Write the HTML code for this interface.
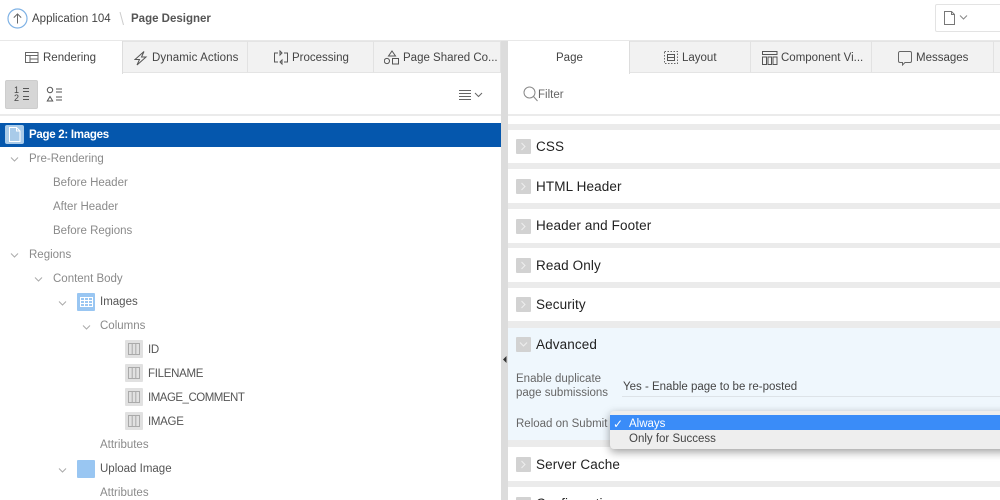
<!DOCTYPE html>
<html><head><meta charset="utf-8">
<style>
html,body{margin:0;padding:0;background:#fff}
#p{position:relative;width:1000px;height:500px;overflow:hidden;background:#fff;font-family:"Liberation Sans",sans-serif;font-size:11.5px;color:#444}
#p div,#p svg{position:absolute}
.t{white-space:nowrap;line-height:14px;letter-spacing:0}
.tab{background:#f2f2f2;top:41px;height:32px;border-right:1px solid #e2e2e2;border-bottom:1px solid #e4e4e4;border-top:1px solid #e4e4e4;box-sizing:border-box}
.g{color:#8a8a8a}
.d{color:#555}
.h{font-size:13.5px;color:#222;letter-spacing:.12px;line-height:16px;white-space:nowrap;left:536px}
.b{left:516px;width:15px;height:15px;background:#d2d2d2;border-radius:1px}
.band{left:508px;width:492px;background:#ebebeb}
svg{fill:none;stroke:#555;stroke-width:1}
.up{letter-spacing:-.3px}
</style></head><body><div id="p">

<!-- Header -->
<svg style="left:7px;top:8px" width="21" height="21" viewBox="0 0 21 21"><circle cx="10.5" cy="10.5" r="9.5" stroke="#7fb2e5" stroke-width="1.2"/><path d="M10.5 15.5V6M6.8 9.6l3.7-3.7 3.7 3.7" stroke="#666"/></svg>
<div class="t" style="left:32px;top:12px;color:#444">Application 104</div>
<svg style="left:119px;top:11px" width="6" height="15"><path d="M1 1l3.500 13" stroke="#ccc"/></svg>
<div class="t" style="left:131px;top:12px;font-weight:bold;color:#555">Page Designer</div>
<div style="left:935px;top:4px;width:70px;height:28px;box-sizing:border-box;border:1px solid #e3e3e3;border-radius:2px"></div>
<svg style="left:943px;top:10px" width="30" height="16"><path d="M1.500 1.500h7l3 3v10h-10zM8.500 1.500v3h3" stroke="#777"/><path d="M17 5.500l3.500 3.500 3.500-3.500" stroke="#888"/></svg>

<!-- Left tabs -->
<div style="left:0;top:40px;width:1000px;height:1px;background:#e8e8e8"></div>
<div class="tab" style="left:122px;width:126px"></div>
<div class="tab" style="left:248px;width:126px"></div>
<div class="tab" style="left:374px;width:127px"></div>
<div style="left:122px;top:41px;width:1px;height:33px;background:#ddd"></div>
<svg style="left:25px;top:51px" width="14" height="13"><path d="M.5 1.500h12.500v10H.5zM.5 4.500h12.500M5 4.500v7M5 8h8" stroke="#666"/></svg>
<div class="t" style="left:43px;top:51px">Rendering</div>
<svg style="left:134px;top:51px" width="14" height="15"><path d="M10 .5L1 8.500h4.500L3 14l9-8H7.500z" stroke="#555"/></svg>
<div class="t" style="left:152px;top:51px;letter-spacing:.1px">Dynamic Actions</div>
<svg style="left:273px;top:50px" width="16" height="15"><path d="M5 3H1.500v9H5M11 12h3.500V3H11M7 1v4l2-2zM9 10v4l-2-2z" stroke="#555"/></svg>
<div class="t" style="left:292px;top:51px">Processing</div>
<svg style="left:384px;top:50px" width="16" height="16"><path d="M8 1l3.500 5h-7zM5.500 11a2.600 2.600 0 1 1-5.200 0 2.600 2.600 0 0 1 5.200 0zM8.500 8.500h6v5.500h-6z" stroke="#555"/></svg>
<div class="t" style="left:403px;top:51px">Page Shared Co...</div>

<!-- Left toolbar -->
<div style="left:5px;top:80px;width:33px;height:29px;box-sizing:border-box;background:#d6d6d6;border:1px solid #cdcdcd;border-radius:2px"></div>
<div class="t" style="left:14px;top:83px;font-size:9px;color:#444">1</div>
<div class="t" style="left:14px;top:91px;font-size:9px;color:#444">2</div>
<svg style="left:22px;top:86px" width="8" height="16"><path d="M1 2.500h6M1 5.500h6M1 10.500h6M1 13.500h6" stroke="#555"/></svg>
<svg style="left:46px;top:86px" width="18" height="17"><circle cx="4" cy="4" r="2.700" stroke="#555"/><path d="M4 10.500l2.700 4.500H1.300zM10 3h6M10 6h6M10 11h6M10 14h6" stroke="#555"/></svg>
<svg style="left:458px;top:89px" width="28" height="12"><path d="M1 1.500h12M1 4.500h12M1 7.500h12M1 10.500h12" stroke="#666"/><path d="M17 4l3.500 3.500L24 4" stroke="#666"/></svg>
<div style="left:0;top:114px;width:501px;height:2px;background:#ebebeb"></div>

<!-- Tree -->
<div style="left:0;top:123px;width:501px;height:24px;background:#0557ad"></div>
<div style="left:5px;top:125px;width:19px;height:19px;background:#a9cbe9;border-radius:2px"></div>
<svg style="left:9px;top:127px" width="12" height="15"><path d="M.5.500h7l3.500 3.500v10.500H.5zM7.500.5v3.500H11" stroke="#fff"/></svg>
<div class="t" style="left:29px;top:128px;color:#fff;font-weight:bold;letter-spacing:-.28px">Page 2: Images</div>

<svg style="left:10px;top:156px" width="10" height="7"><path d="M1 1.500l3.500 3.500L8 1.500" stroke="#aaa"/></svg>
<div class="t g" style="left:29px;top:152px">Pre-Rendering</div>
<div class="t g" style="left:53px;top:176px">Before Header</div>
<div class="t g" style="left:53px;top:200px">After Header</div>
<div class="t g" style="left:53px;top:224px">Before Regions</div>
<svg style="left:10px;top:252px" width="10" height="7"><path d="M1 1.500l3.500 3.500L8 1.500" stroke="#aaa"/></svg>
<div class="t g" style="left:29px;top:248px">Regions</div>
<svg style="left:34px;top:276px" width="10" height="7"><path d="M1 1.500l3.500 3.500L8 1.500" stroke="#aaa"/></svg>
<div class="t g" style="left:53px;top:272px">Content Body</div>
<svg style="left:58px;top:300px" width="10" height="7"><path d="M1 1.500l3.500 3.500L8 1.500" stroke="#aaa"/></svg>
<div style="left:77px;top:293px;width:18px;height:18px;background:#99c6f2;border-radius:1px"></div>
<svg style="left:80px;top:297px" width="13" height="10"><path d="M.5.500h12v9H.5zM.5 3.500h12M.5 6.500h12M4.500.5v9M8.500.5v9" stroke="#fff"/></svg>
<div class="t d" style="left:100px;top:295px">Images</div>
<svg style="left:82px;top:324px" width="10" height="7"><path d="M1 1.500l3.500 3.500L8 1.500" stroke="#aaa"/></svg>
<div class="t g" style="left:100px;top:319px">Columns</div>

<div style="left:125px;top:340px;width:18px;height:18px;background:#e1e1e1;border-radius:1px"></div>
<svg style="left:128px;top:343px" width="12" height="12"><path d="M.5.500h11v11H.5zM4.200.5v11M7.800.5v11" stroke="#aaa"/></svg>
<div class="t d up" style="left:148px;top:343px">ID</div>
<div style="left:125px;top:364px;width:18px;height:18px;background:#e1e1e1;border-radius:1px"></div>
<svg style="left:128px;top:367px" width="12" height="12"><path d="M.5.500h11v11H.5zM4.200.5v11M7.800.5v11" stroke="#aaa"/></svg>
<div class="t d up" style="left:148px;top:367px">FILENAME</div>
<div style="left:125px;top:388px;width:18px;height:18px;background:#e1e1e1;border-radius:1px"></div>
<svg style="left:128px;top:391px" width="12" height="12"><path d="M.5.500h11v11H.5zM4.200.5v11M7.800.5v11" stroke="#aaa"/></svg>
<div class="t d" style="left:148px;top:391px;letter-spacing:-.5px">IMAGE_COMMENT</div>
<div style="left:125px;top:412px;width:18px;height:18px;background:#e1e1e1;border-radius:1px"></div>
<svg style="left:128px;top:415px" width="12" height="12"><path d="M.5.500h11v11H.5zM4.200.5v11M7.800.5v11" stroke="#aaa"/></svg>
<div class="t d up" style="left:148px;top:415px">IMAGE</div>
<div class="t g" style="left:100px;top:438px">Attributes</div>
<svg style="left:58px;top:467px" width="10" height="7"><path d="M1 1.500l3.500 3.500L8 1.500" stroke="#aaa"/></svg>
<div style="left:77px;top:460px;width:18px;height:18px;background:#99c6f2;border-radius:1px"></div>
<div class="t d" style="left:100px;top:462px">Upload Image</div>
<div class="t g" style="left:100px;top:486px">Attributes</div>

<!-- Splitter -->
<div style="left:501px;top:41px;width:7px;height:459px;background:#dcdcdc"></div>
<svg style="left:503px;top:356px;" width="4" height="7"><path d="M3.500 0v7L0 3.500z" fill="#333" stroke="none"/></svg>

<!-- Right tabs -->
<div class="tab" style="left:630px;width:121px"></div>
<div class="tab" style="left:751px;width:121px"></div>
<div class="tab" style="left:872px;width:122px"></div>
<div class="tab" style="left:994px;width:6px;border-right:0"></div>
<div style="left:629px;top:41px;width:1px;height:33px;background:#ddd"></div>
<div class="t" style="left:556px;top:51px">Page</div>
<svg style="left:664px;top:51px" width="14" height="13"><path d="M.5.500h13v12H.5z" stroke="#666" stroke-dasharray="1.500 1.500"/><path d="M3.500 3.500h7v6h-7zM3.500 6.500h7" stroke="#555"/></svg>
<div class="t" style="left:682px;top:51px">Layout</div>
<svg style="left:762px;top:51px" width="16" height="14"><path d="M.5.500h14.500v3H.5zM.5 6h4v7.500h-4zM6 6h3.500v7.500H6zM11 6h4v7.500h-4z" stroke="#555"/></svg>
<div class="t" style="left:781px;top:51px">Component Vi...</div>
<svg style="left:898px;top:51px" width="14" height="15"><path d="M2 .500h10a1.500 1.500 0 0 1 1.500 1.500v8a1.500 1.500 0 0 1-1.500 1.500H7L4.500 14v-2.500H2A1.500 1.500 0 0 1 .5 10V2A1.500 1.500 0 0 1 2 .5z" stroke="#666"/></svg>
<div class="t" style="left:916px;top:51px">Messages</div>

<!-- Filter -->
<svg style="left:523px;top:86px" width="15" height="16"><circle cx="6.500" cy="6.500" r="5.500" stroke="#888"/><path d="M10.500 10.500l4 4.500" stroke="#888"/></svg>
<div class="t" style="left:538px;top:88px;color:#666">Filter</div>
<div style="left:508px;top:114px;width:492px;height:2px;background:#ebebeb"></div>

<!-- Sections -->
<div class="band" style="top:124px;height:6px"></div>
<div class="b" style="top:139px"></div><svg style="left:520px;top:142px" width="7" height="10"><path d="M1.500 1l3.500 3.500L1.500 8" stroke="#eee"/></svg>
<div class="h" style="top:139px">CSS</div>
<div class="band" style="top:163px;height:6px"></div>
<div class="b" style="top:179px"></div><svg style="left:520px;top:182px" width="7" height="10"><path d="M1.500 1l3.500 3.500L1.500 8" stroke="#eee"/></svg>
<div class="h" style="top:179px">HTML Header</div>
<div class="band" style="top:203px;height:6px"></div>
<div class="b" style="top:219px"></div><svg style="left:520px;top:222px" width="7" height="10"><path d="M1.500 1l3.500 3.500L1.500 8" stroke="#eee"/></svg>
<div class="h" style="top:218px">Header and Footer</div>
<div class="band" style="top:243px;height:5px"></div>
<div class="b" style="top:258px"></div><svg style="left:520px;top:261px" width="7" height="10"><path d="M1.500 1l3.500 3.500L1.500 8" stroke="#eee"/></svg>
<div class="h" style="top:258px">Read Only</div>
<div class="band" style="top:282px;height:6px"></div>
<div class="b" style="top:297px"></div><svg style="left:520px;top:300px" width="7" height="10"><path d="M1.500 1l3.500 3.500L1.500 8" stroke="#eee"/></svg>
<div class="h" style="top:297px">Security</div>
<div class="band" style="top:321px;height:7px"></div>

<!-- Advanced -->
<div style="left:508px;top:328px;width:492px;height:112px;background:#eff7fd"></div>
<div class="b" style="top:337px"></div><svg style="left:519px;top:341px" width="10" height="7"><path d="M1 1.500l3.500 3.500L8 1.500" stroke="#eee"/></svg>
<div class="h" style="top:337px">Advanced</div>
<div class="t" style="left:516px;top:372px;color:#666">Enable duplicate</div>
<div class="t" style="left:516px;top:386px;color:#666">page submissions</div>
<div class="t" style="left:623px;top:380px;color:#444">Yes - Enable page to be re-posted</div>
<div style="left:622px;top:396px;width:378px;height:1px;background:#dde3e8"></div>
<div class="t" style="left:516px;top:417px;color:#666">Reload on Submit</div>

<div class="band" style="top:440px;height:7px"></div>
<div class="b" style="top:457px"></div><svg style="left:520px;top:460px" width="7" height="10"><path d="M1.500 1l3.500 3.500L1.500 8" stroke="#eee"/></svg>
<div class="h" style="top:457px">Server Cache</div>
<div class="band" style="top:481px;height:6px"></div>
<div class="b" style="top:497px"></div>
<div class="h" style="top:496px">Configuration</div>

<!-- Dropdown -->
<div style="left:610px;top:411px;width:400px;height:38px;background:#eee;border-radius:4px 0 0 4px;box-shadow:0 3px 9px rgba(0,0,0,.38)"></div>
<div style="left:610px;top:415px;width:390px;height:15px;background:#3a8cf8"></div>
<div class="t" style="left:613px;top:417px;color:#fff;font-size:12px;font-weight:bold;font-family:'DejaVu Sans',sans-serif">✓</div>
<div class="t" style="left:629px;top:417px;color:#fff">Always</div>
<div class="t" style="left:629px;top:432px;color:#444">Only for Success</div>

</div></body></html>
